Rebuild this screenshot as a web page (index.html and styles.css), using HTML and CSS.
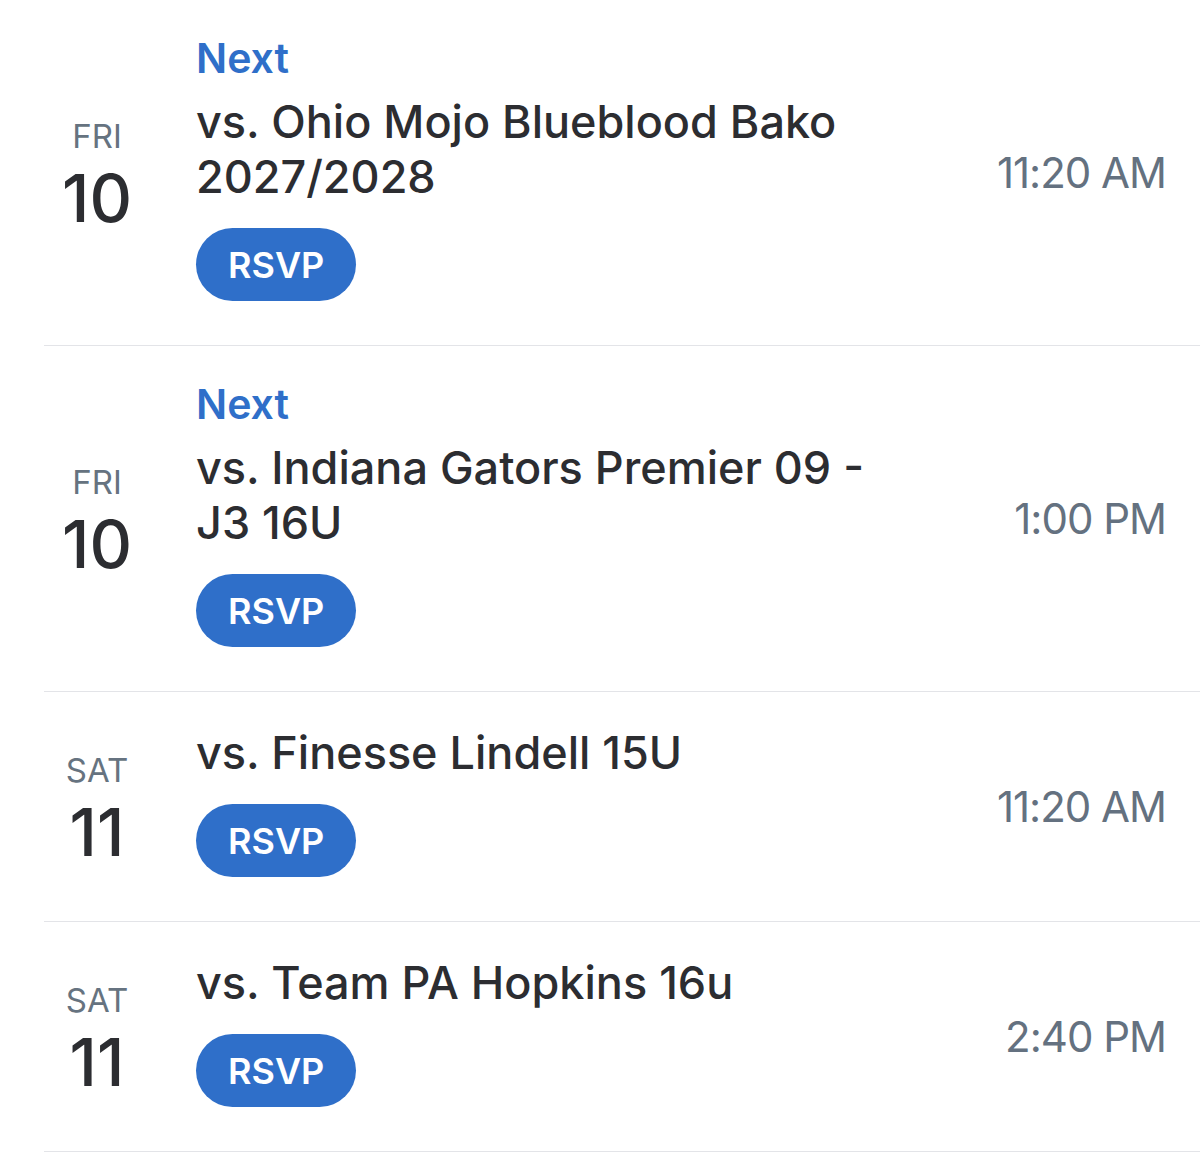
FILE: index.html
```html
<!DOCTYPE html>
<html lang="en">
<head>
  <meta charset="UTF-8">
  <meta name="viewport" content="width=device-width, initial-scale=1.0">
  <title>Schedule</title>
  <link rel="stylesheet" href="styles.css">
</head>
<body>
  <main class="schedule">
    <!-- Fri 10 -->
    <div class="game">
      <div class="date">
        <span class="day">FRI</span>
        <span class="num">10</span>
      </div>
      <div class="info">
        <div class="next">Next</div>
        <div class="opponent">vs. Ohio Mojo Blueblood Bako 2027/2028</div>
        <button class="rsvp">RSVP</button>
      </div>
      <div class="time">11:20 AM</div>
    </div>

    <div class="game">
      <div class="date">
        <span class="day">FRI</span>
        <span class="num">10</span>
      </div>
      <div class="info">
        <div class="next">Next</div>
        <div class="opponent">vs. Indiana Gators Premier 09 - J3 16U</div>
        <button class="rsvp">RSVP</button>
      </div>
      <div class="time">1:00 PM</div>
    </div>

    <!-- Sat 11 -->
    <div class="game">
      <div class="date">
        <span class="day">SAT</span>
        <span class="num">11</span>
      </div>
      <div class="info">
        <div class="opponent">vs. Finesse Lindell 15U</div>
        <button class="rsvp">RSVP</button>
      </div>
      <div class="time">11:20 AM</div>
    </div>

    <div class="game">
      <div class="date">
        <span class="day">SAT</span>
        <span class="num">11</span>
      </div>
      <div class="info">
        <div class="opponent">vs. Team PA Hopkins 16u</div>
        <button class="rsvp">RSVP</button>
      </div>
      <div class="time">2:40 PM</div>
    </div>
  </main>
</body>
</html>
```

FILE: styles.css
```css
body {
  font-family: Inter, "Noto Sans", sans-serif;
  margin: 0;
  padding: 0;
  background-color: #fff;
}

.schedule {
  padding-left: 44px;
}

.game {
  display: flex;
  align-items: center;
  border-bottom: 1px solid #e3e4e8;
  padding-right: 34px;
}

.date {
  width: 106px;
  display: flex;
  flex-direction: column;
  align-items: center;
  flex-shrink: 0;
  margin-top: 3px;
}

.day {
  font-size: 33px;
  line-height: 36px;
  color: #667380;
}

.num {
  font-size: 66px;
  line-height: 66px;
  margin-top: 11px;
  font-weight: 500;
  color: #2c2d31;
}

.info {
  flex: 1;
  margin-left: 46px;
  padding: 33px 0 44px;
  display: flex;
  flex-direction: column;
  align-items: flex-start;
}

.next {
  font-size: 41px;
  line-height: 50px;
  font-weight: 600;
  color: #2f6fc9;
  margin-bottom: 11px;
}

.opponent {
  font-size: 45px;
  line-height: 55px;
  font-weight: 500;
  color: #2c2d31;
  max-width: 700px;
}

.rsvp {
  margin-top: 24px;
  height: 73px;
  padding: 0 32px;
  border: none;
  border-radius: 37px;
  background-color: #2f6fc9;
  color: #fff;
  font-family: inherit;
  font-size: 36px;
  font-weight: 600;
}

.time {
  font-size: 42px;
  letter-spacing: -1px;
  color: #647180;
  white-space: nowrap;
}
```
